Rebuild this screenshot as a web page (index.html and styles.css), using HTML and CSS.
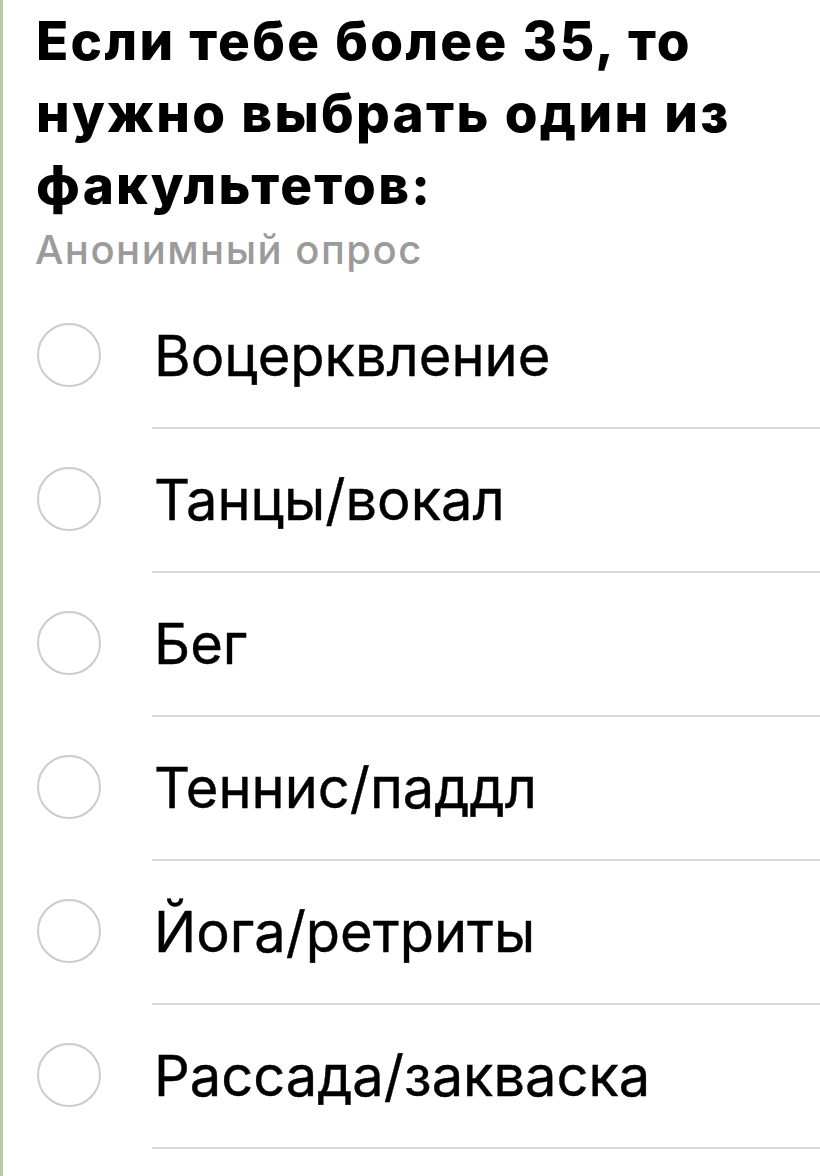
FILE: index.html
```html
<!DOCTYPE html>
<html lang="ru">
<head>
<meta charset="utf-8">
<title>Опрос</title>
<link rel="stylesheet" href="styles.css">
</head>
<body>
<div class="poll">
  <h1 class="poll-question">Если тебе более 35, то нужно выбрать один из факультетов:</h1>
  <div class="poll-type">Анонимный опрос</div>
  <ul class="poll-options">
    <li class="poll-option"><span class="radio"></span><span class="option-label">Воцерквление</span></li>
    <li class="poll-option"><span class="radio"></span><span class="option-label">Танцы/вокал</span></li>
    <li class="poll-option"><span class="radio"></span><span class="option-label">Бег</span></li>
    <li class="poll-option"><span class="radio"></span><span class="option-label">Теннис/паддл</span></li>
    <li class="poll-option"><span class="radio"></span><span class="option-label">Йога/ретриты</span></li>
    <li class="poll-option"><span class="radio"></span><span class="option-label">Рассада/закваска</span></li>
  </ul>
</div>
</body>
</html>
```

FILE: styles.css
```css
html, body {
  margin: 0;
  padding: 0;
  background: #ffffff;
}

body {
  font-family: Inter, "Liberation Sans", Arial, sans-serif;
  color: #000000;
  width: 820px;
  height: 1176px;
  overflow: hidden;
}

.poll {
  height: 100%;
  border-left: 3px solid #b7caa6;
  box-sizing: border-box;
  padding-top: 5px;
}

.poll-question {
  margin: 0;
  padding-left: 33px;
  padding-right: 20px;
  font-size: 53px;
  line-height: 72px;
  font-weight: 800;
  letter-spacing: 2.3px;
}

.poll-type {
  margin-top: 5px;
  padding-left: 32px;
  font-size: 40px;
  line-height: 48px;
  font-weight: 500;
  letter-spacing: 1.5px;
  color: #9b9b9b;
}

.poll-options {
  list-style: none;
  margin: 11px 0 0;
  padding: 0;
}

.poll-option {
  display: flex;
  align-items: center;
  height: 144px;
  position: relative;
}

.poll-option::after {
  content: "";
  position: absolute;
  left: 149px;
  right: 0;
  bottom: 0;
  height: 2px;
  background: #d6d6d6;
}

.radio {
  width: 60px;
  height: 60px;
  border: 2.5px solid #cccccc;
  border-radius: 50%;
  margin-left: 34px;
  margin-top: -4px;
  flex: none;
}

.option-label {
  margin-left: 53px;
  margin-top: -2px;
  font-size: 56px;
  line-height: 64px;
  -webkit-text-stroke: 0.4px #000000;
}
```
